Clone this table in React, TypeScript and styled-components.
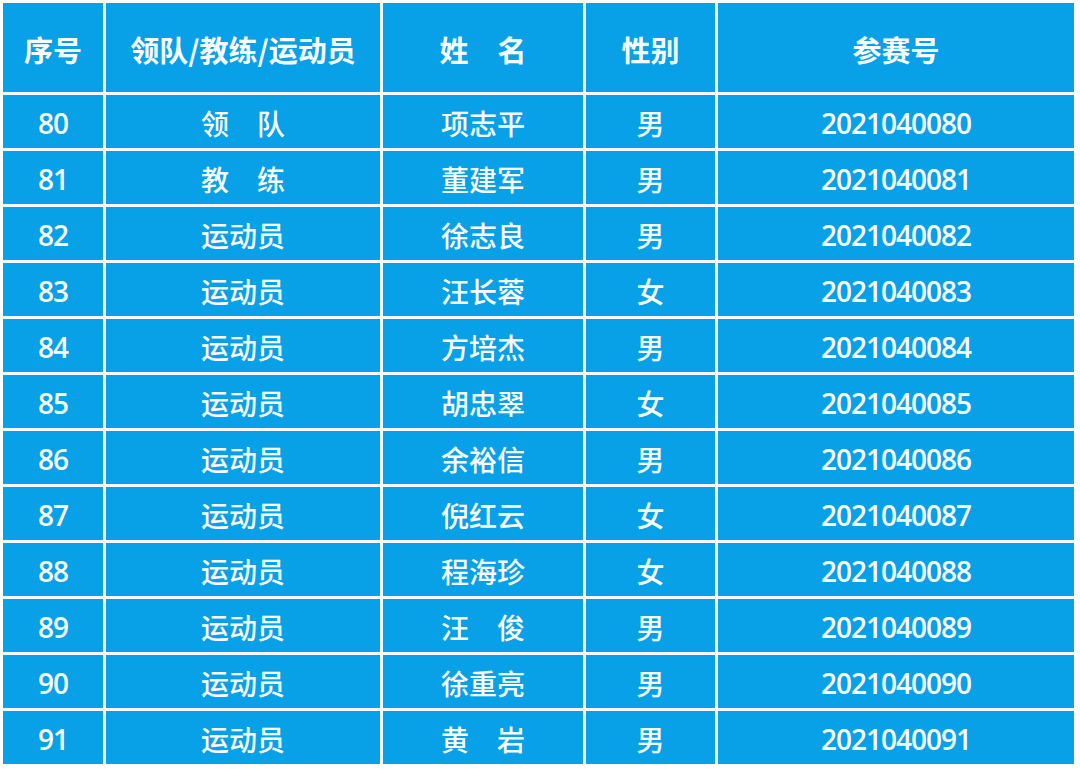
import React from 'react';
import styled, { createGlobalStyle } from 'styled-components';

const GlobalStyle = createGlobalStyle`
  html, body {
    margin: 0;
    padding: 0;
    background: #ffffff;
  }
`

const Page = styled.div`
  width: 1080px;
  height: 769px;
  padding: 3px 6px 0 3px;
  box-sizing: border-box;
  background: #ffffff;
`

const Table = styled.div`
  display: grid;
  grid-template-columns: 100px 274px 200px 129px 356px;
  grid-template-rows: 89px repeat(12, 53px);
  gap: 3px;
  background: #f4fbff;
`

const Cell = styled.div<{ $head?: boolean; $num?: boolean }>`
  display: flex;
  align-items: center;
  justify-content: center;
  background: #08a0e6;
  color: #f7fcff;
  font-family: ${p => p.$num ? '"Open Sans", "Noto Sans CJK SC"' : '"Noto Sans CJK SC", "Noto Sans"'}, sans-serif;
  font-size: ${p => p.$head ? '29px' : '28px'};
  font-weight: ${p => p.$head ? 700 : p.$num ? 600 : 500};
  letter-spacing: ${p => p.$num ? '-1px' : '0'};
  white-space: pre;
  line-height: 1;
  padding-top: ${p => p.$head ? '4px' : '2px'};
  box-sizing: border-box;
`

const headers = ['序号', '领队/教练/运动员', '姓　名', '性别', '参赛号']

const rows: [string, string, string, string][] = [
  ['80', '领　队', '项志平', '男'],
  ['81', '教　练', '董建军', '男'],
  ['82', '运动员', '徐志良', '男'],
  ['83', '运动员', '汪长蓉', '女'],
  ['84', '运动员', '方培杰', '男'],
  ['85', '运动员', '胡忠翠', '女'],
  ['86', '运动员', '余裕信', '男'],
  ['87', '运动员', '倪红云', '女'],
  ['88', '运动员', '程海珍', '女'],
  ['89', '运动员', '汪　俊', '男'],
  ['90', '运动员', '徐重亮', '男'],
  ['91', '运动员', '黄　岩', '男'],
]

const App = () => (
  <>
    <GlobalStyle/>
    <Page>
      <Table>
        {headers.map(h => <Cell key={h} $head>{h}</Cell>)}
        {rows.map(([no, role, name, sex]) => (
          <React.Fragment key={no}>
            <Cell $num>{no}</Cell>
            <Cell>{role}</Cell>
            <Cell>{name}</Cell>
            <Cell>{sex}</Cell>
            <Cell $num>{`20210400${no}`}</Cell>
          </React.Fragment>
        ))}
      </Table>
    </Page>
  </>
)

export default App
